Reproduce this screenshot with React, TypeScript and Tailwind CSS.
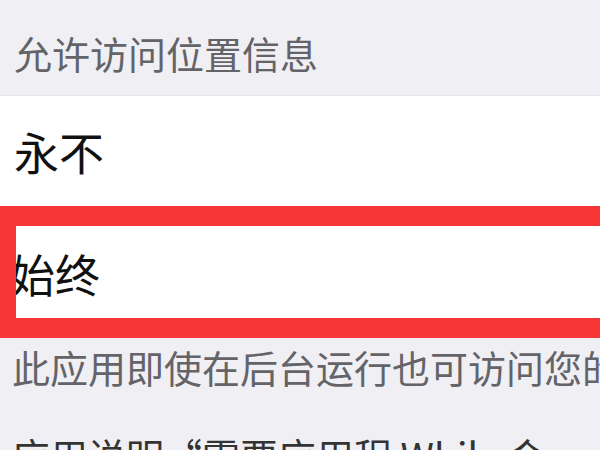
const cjk = { fontFamily: '"Noto Sans CJK SC", "Noto Sans", sans-serif' };

export default function App() {
  return (
    <div
      className="w-[600px] h-[450px] overflow-hidden bg-[#efeff4] flex flex-col"
      style={cjk}
    >
      {/* Section header */}
      <div className="h-[96px] shrink-0 flex items-center pl-[14px] pt-[10px] border-b border-[#e4e4e8]">
        <span className="text-[38px] leading-none text-[#636368]">允许访问位置信息</span>
      </div>

      {/* Options */}
      <div className="h-[110px] shrink-0 bg-white flex items-center pl-[14px]">
        <span className="text-[45px] leading-none text-[#111]">永不</span>
      </div>
      <div className="h-[132px] shrink-0 bg-white border-y-[20px] border-l-[16px] border-[#f73636] mr-[-40px] flex items-center overflow-hidden">
        <span className="text-[45px] leading-none text-[#111] ml-[-6px] pt-[2px]">始终</span>
      </div>

      {/* Footer */}
      <div className="flex flex-col pl-[12px] pt-[10px] gap-[50px] whitespace-nowrap overflow-hidden">
        <span className="text-[38px] leading-none text-[#636368]">此应用即使在后台运行也可访问您的</span>
        <span className="text-[38px] leading-none text-[#333]">应用说明“需要应用程 While 会</span>
      </div>
    </div>
  );
}
